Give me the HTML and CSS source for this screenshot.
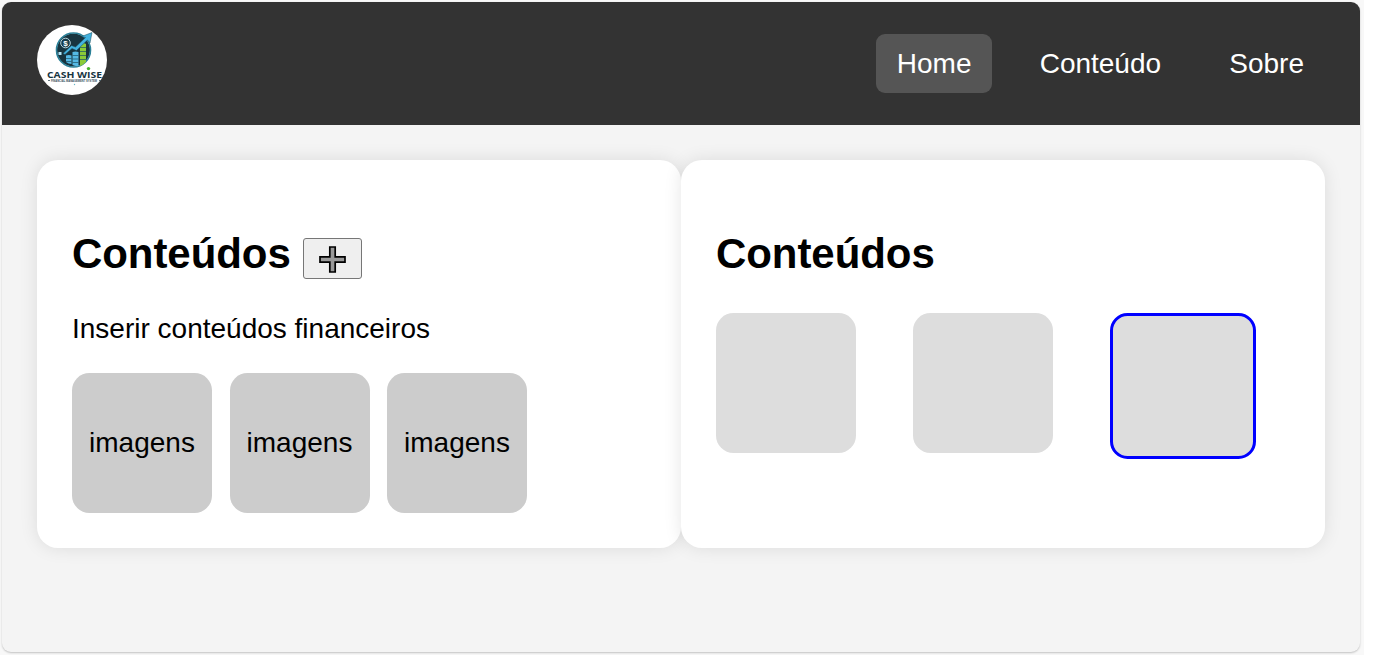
FILE: index.html
```html
<!DOCTYPE html>
<html lang="pt-BR">
<head>
<meta charset="UTF-8">
<title>Cash Wise</title>
<link rel="stylesheet" href="styles.css">
</head>
<body>
<div class="backdrop">
<div class="window">
  <header class="header">
    <svg class="logo" viewBox="0 0 70 70" role="img" aria-label="Cash Wise">
      <circle cx="35" cy="35" r="35" fill="#fff"/>
      <circle cx="36.5" cy="25" r="16.6" fill="#18343f"/>
      <circle cx="36.5" cy="25" r="17" fill="none" stroke="#2b8098" stroke-width="1.6"/>
      <path d="M29 30.5q3-1 5.500 0v8.500q-3 0-5.500-2z M35.500 27q3-1 6 0v14q-3 .5-6-1z" fill="#55b9e5"/>
      <path d="M43 19q3-2 6 0v18q-3 3-6 4z" fill="#8acb38"/>
      <path d="M29 33.500h5.500M29 36.500h5.500M35.500 30.500h6M35.500 34h6M35.500 37.500h6M43 22.500h6M43 26.500h6M43 30.500h6M43 34.500h6" stroke="#1d5365" stroke-width=".7"/>
      <path d="M21.500 27h3v3h-3z" fill="#b4e8fa"/>
      <path d="M26 28.500L34.500 20.500L38.500 22L48.500 12.500L44.500 11.500L55 7.500L53 18L50.500 15L39.500 25.500L35 23.500L28 29.500z" fill="#43b2df" stroke="#174657" stroke-width=".5"/>
      <circle cx="28.500" cy="18" r="4.800" fill="#173c4b" stroke="#b7d6df" stroke-width="1"/>
      <text x="28.500" y="20.800" class="logo-coin">$</text>
      <text x="10" y="53" class="logo-name" textLength="55" lengthAdjust="spacingAndGlyphs">CASH WISE</text>
      <circle cx="51.500" cy="43.600" r="1.700" fill="#45b52c"/>
      <text x="14" y="57" class="logo-tag" textLength="46" lengthAdjust="spacingAndGlyphs">FINANCIAL MANAGEMENT SYSTEM</text>
      <path d="M11 55.500h2M62 55.500h2" stroke="#38505b" stroke-width=".8"/>
      <circle cx="37.500" cy="59.500" r=".7" fill="#68b7c9"/>
    </svg>
    <nav class="nav">
      <a class="nav-link active">Home</a>
      <a class="nav-link">Conteúdo</a>
      <a class="nav-link">Sobre</a>
    </nav>
  </header>
  <main class="main">
    <section class="card">
      <h2 class="title">Conteúdos <button class="add" aria-label="Adicionar"><svg class="plus" viewBox="0 0 27 27"><path d="M10.800 1h5.400v9.800h9.800v5.400h-9.800v9.800h-5.400v-9.800h-9.800v-5.400h9.800z" fill="#999" stroke="#000" stroke-width="1.700"/></svg></button></h2>
      <p class="lead">Inserir conteúdos financeiros</p>
      <div class="images">
        <div class="image">imagens</div>
        <div class="image">imagens</div>
        <div class="image">imagens</div>
      </div>
    </section>
    <section class="card">
      <h2 class="title">Conteúdos</h2>
      <div class="boxes">
        <div class="box"></div>
        <div class="box"></div>
        <div class="box selected"></div>
      </div>
    </section>
  </main>
</div>
</div>
</body>
</html>
```
FILE: styles.css
```css
body {
  margin: 0;
  background: #fff;
  font: 28px/32px "Liberation Sans", Arial, sans-serif;
  color: #000;
}
.backdrop {
  box-sizing: border-box;
  width: 1364px;
  height: 655px;
  padding: 2px;
  background: #f8f8f8;
  overflow: hidden;
}
.window {
  width: 1358px;
  height: 650px;
  border-radius: 9px;
  background: #f4f4f4;
  box-shadow: 0 1px 2px rgba(0, 0, 0, .22);
  overflow: hidden;
}
.header {
  box-sizing: border-box;
  display: flex;
  justify-content: space-between;
  height: 123px;
  padding: 23px 35px 0;
  background: #333;
}
.logo {
  width: 70px;
  height: 70px;
  overflow: visible;
}
.logo-coin {
  font-size: 8px;
  font-weight: bold;
  text-anchor: middle;
  fill: #fff;
}
.logo-name {
  font: bold 9.6px "Open Sans", "Liberation Sans", sans-serif;
  fill: #173441;
}
.logo-tag {
  font: bold 3px "Liberation Sans", Arial, sans-serif;
  fill: #38505b;
}
.nav {
  display: flex;
  align-items: flex-start;
  gap: 26.2px;
  padding-top: 9px;
}
.nav-link {
  box-sizing: border-box;
  height: 59px;
  padding: 14px 21px 0;
  border-radius: 9px;
  color: #fff;
}
.nav-link.active {
  background: #555;
}
.main {
  display: flex;
  padding: 35px;
}
.card {
  box-sizing: border-box;
  flex: 1;
  height: 388px;
  padding: 70px 35px 35px;
  border-radius: 21px;
  background: #fff;
  box-shadow: 0 0 18px rgba(0, 0, 0, .1);
}
.title {
  height: 48px;
  margin: 0 0 35px;
  font-size: 42px;
  line-height: 48px;
  letter-spacing: -.07px;
  white-space: nowrap;
}
.add {
  box-sizing: border-box;
  display: inline-flex;
  align-items: flex-start;
  justify-content: flex-start;
  width: 59px;
  height: 41px;
  margin: 8px 0 0 .5px;
  padding: 7px 0 0 15px;
  border: 1px solid #767676;
  border-radius: 3px;
  background: #efefef;
  vertical-align: top;
}
.plus {
  width: 27px;
  height: 27px;
}
.lead {
  margin: 0 0 28px;
}
.images {
  display: flex;
  gap: 17.5px;
}
.image {
  width: 140px;
  height: 140px;
  border-radius: 17.5px;
  background: #ccc;
  line-height: 140px;
  text-align: center;
}
.boxes {
  display: flex;
  gap: 57px;
}
.box {
  width: 140px;
  height: 140px;
  border-radius: 17.5px;
  background: #ddd;
}
.box.selected {
  border: 3px solid #00f;
}
```
